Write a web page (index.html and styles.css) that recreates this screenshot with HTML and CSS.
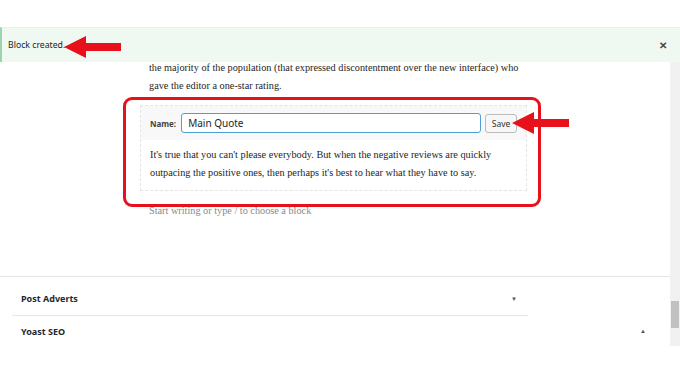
FILE: index.html
```html
<!DOCTYPE html>
<html lang="en">
<head>
    <meta charset="UTF-8">
    <meta name="viewport" content="width=device-width, initial-scale=1.0">
    <title>Block created</title>
    <link rel="stylesheet" href="styles.css">
</head>
<body>
    <div class="topbar"></div>
    <div class="notice">
        <span class="notice-text">Block created.</span>
        <span class="notice-close">&#x2715;</span>
    </div>
    <div class="workspace">
        <div class="editor">
            <div class="post">
                <p class="post-text">the majority of the population (that expressed discontentment over the new interface) who gave the editor a one-star rating.</p>
                <div class="block">
                    <div class="block-header">
                        <label class="block-label" for="blockName">Name:</label>
                        <input class="block-input" id="blockName" type="text" value="Main Quote">
                        <button class="block-save">Save</button>
                    </div>
                    <p class="block-content">It's true that you can't please everybody. But when the negative reviews are quickly outpacing the positive ones, then perhaps it's best to hear what they have to say.</p>
                </div>
                <p class="placeholder">Start writing or type / to choose a block</p>
            </div>
            <div class="panels">
                <div class="panel panel-short">
                    <span>Post Adverts</span>
                    <span class="caret">&#9660;</span>
                </div>
                <div class="panel panel-wide">
                    <span>Yoast SEO</span>
                    <span class="caret">&#9650;</span>
                </div>
            </div>
            <div class="highlight"></div>
        </div>
        <div class="scrollbar"><div class="scrollbar-thumb"></div></div>
    </div>

    <svg class="arrow arrow-notice" width="58" height="24" viewBox="0 0 58 24">
        <polygon points="0,11 22,0 22,7 57,7 57,15 22,15 22,22" fill="#e8111b"/>
    </svg>
    <svg class="arrow arrow-save" width="58" height="24" viewBox="0 0 58 24">
        <polygon points="0,11 22,0 22,7 57,7 57,15 22,15 22,22" fill="#e8111b"/>
    </svg>
</body>
</html>
```
FILE: styles.css
```css
body {
    margin: 0;
    padding: 0;
    width: 680px;
    height: 383px;
    background-color: #fff;
    font-family: "Noto Sans", "Open Sans", sans-serif;
    color: #23282d;
    position: relative;
    overflow: hidden;
}

.topbar {
    height: 27px;
}

.notice {
    height: 35px;
    box-sizing: border-box;
    background-color: #eff8f1;
    border-left: 2px solid #9fd3ad;
    border-top: 1px solid #e6f1e8;
    display: flex;
    align-items: center;
    justify-content: space-between;
    padding: 0 13px 0 6px;
    font-size: 8.7px;
}

.notice-close {
    font-size: 10px;
    font-weight: bold;
    color: #444;
}

.workspace {
    display: flex;
}

.editor {
    flex: 1;
    position: relative;
}

.post {
    padding-left: 149px;
    width: 380px;
    font-family: "Liberation Serif", "Times New Roman", serif;
    font-size: 10.25px;
    color: #1e1e1e;
}

.post-text {
    margin: -3px 0 0;
    line-height: 18px;
}

.block {
    margin: 10px 0 0 -9px;
    width: 387px;
    border: 1px dashed #e4e4e4;
    box-sizing: border-box;
}

.block-header {
    height: 34px;
    background-color: #f8f8f8;
    display: flex;
    align-items: center;
    padding: 0 9px;
    font-family: "Noto Sans", sans-serif;
}

.block-label {
    font-size: 8px;
    font-weight: bold;
    color: #444;
    margin-right: 5px;
}

.block-input {
    width: 302px;
    height: 20px;
    box-sizing: border-box;
    border: 1px solid #4d9fd6;
    border-radius: 3px;
    padding: 0 6px;
    font-family: "Noto Sans", sans-serif;
    font-size: 10px;
    color: #1e1e1e;
    background: #fff;
    outline: none;
}

.block-save {
    margin-left: 4px;
    width: 32px;
    height: 19px;
    padding: 0;
    border: 1px solid #bbb;
    border-radius: 3px;
    background-color: #f7f7f7;
    font-family: "Noto Sans", sans-serif;
    font-size: 8.5px;
    color: #333;
}

.block-content {
    margin: 0;
    padding: 6px 9px 8px;
    line-height: 18px;
    background-color: #fff;
}

.placeholder {
    margin: 11px 0 0;
    line-height: 18px;
    color: #8a8a8a;
}

.panels {
    margin-top: 56px;
    border-top: 1px solid #e6e6e6;
    font-size: 9px;
    font-weight: bold;
}

.panel {
    display: flex;
    justify-content: space-between;
    align-items: center;
    margin-left: 12px;
    padding-left: 9px;
    box-sizing: border-box;
}

.panel-short {
    width: 516px;
    height: 39px;
    padding-top: 5px;
    padding-right: 11px;
    border-bottom: 1px solid #e6e6e6;
}

.panel-wide {
    width: 646px;
    height: 30px;
    padding-right: 12px;
}

.caret {
    font-size: 6px;
    color: #555;
}

.highlight {
    position: absolute;
    left: 123px;
    top: 35px;
    width: 418px;
    height: 110px;
    box-sizing: border-box;
    border: 3px solid #e8111b;
    border-radius: 9px;
}

.scrollbar {
    width: 10px;
    height: 284px;
    background-color: #f1f1f1;
}

.scrollbar-thumb {
    margin: 239px 0 0 1px;
    width: 8px;
    height: 27px;
    background-color: #c1c1c1;
}

.arrow {
    position: absolute;
}

.arrow-notice {
    left: 64px;
    top: 36px;
}

.arrow-save {
    left: 512px;
    top: 112px;
}
```
